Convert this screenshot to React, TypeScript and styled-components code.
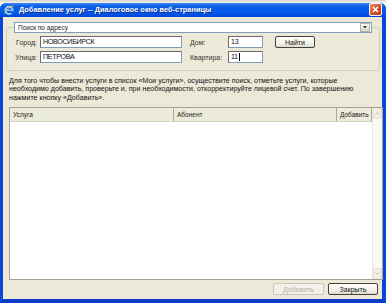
import React from 'react'
import styled, { createGlobalStyle } from 'styled-components'

const GlobalStyle = createGlobalStyle`
  html, body {
    margin: 0;
    padding: 0;
    width: 386px;
    height: 303px;
    overflow: hidden;
    background: #ffffff;
  }
  body {
    font-family: "Liberation Sans", Arial, sans-serif;
  }
`

const Screen = styled.div`
  width: 386px;
  height: 303px;
  display: flex;
  flex-direction: column;
`

const PageStrip = styled.div`
  height: 3px;
  background: linear-gradient(#d6d3c6, #f4f3ee);
`

const Window = styled.div`
  flex: 1;
  display: flex;
  flex-direction: column;
  background: #0a48dc;
  border-radius: 6px 6px 0 0;
  overflow: hidden;
`

const TitleBar = styled.div`
  height: 15px;
  display: flex;
  align-items: center;
  padding: 0 4px 0 4px;
  background: linear-gradient(#3b86f7 0%, #0a5ce8 25%, #0558ea 70%, #0446d6 100%);
  gap: 5px;
`

const TitleText = styled.div`
  flex: 1;
  color: #ffffff;
  font-size: 7.4px;
  font-weight: bold;
  text-shadow: 1px 1px 0 #0a2a8a;
  white-space: nowrap;
`

const CloseButton = styled.div`
  width: 11px;
  height: 11px;
  border: 1px solid #ffffff;
  border-radius: 2px;
  background: linear-gradient(135deg, #ec8a6a, #d34a22 60%, #c23a14);
  display: flex;
  align-items: center;
  justify-content: center;
`

const Client = styled.div`
  flex: 1;
  display: flex;
  flex-direction: column;
  background: #ece9d8;
  border-left: 3px solid #0b46d8;
  border-right: 4px solid #0b46d8;
  border-bottom: 4px solid #0a3cc8;
  padding: 5px 3px 4px 3px;
`

const GroupBox = styled.fieldset`
  margin: 0;
  padding: 1px 7px 6px 7px;
  border: 1px solid #d0d0bf;
  border-radius: 3px;
  display: flex;
  flex-direction: column;
  gap: 2px;
`

const Legend = styled.legend`
  padding: 0;
  margin: 0;
  width: 358px;
`

const Select = styled.div`
  height: 9px;
  border: 1px solid #7f9db9;
  background: #ffffff;
  display: flex;
  align-items: center;
  font-size: 6.5px;
  color: #222;
  padding-left: 3px;
`

const SelectText = styled.span`
  flex: 1;
`

const SelectArrow = styled.div`
  width: 8px;
  height: 7px;
  margin-right: 1px;
  background: linear-gradient(#fafaf5, #d9d6c6);
  border: 1px solid #b5b2a5;
  display: flex;
  align-items: center;
  justify-content: center;
`

const Row = styled.div`
  display: flex;
  align-items: center;
  height: 13px;
`

const Label = styled.span<{ $width: number; $right?: boolean }>`
  width: ${(p) => p.$width}px;
  text-align: ${(p) => (p.$right ? 'right' : 'left')};
  padding-right: ${(p) => (p.$right ? 3 : 0)}px;
  box-sizing: border-box;
  font-size: 7px;
  color: #333;
  white-space: nowrap;
`

const TextBox = styled.div<{ $width: number; $gap?: number }>`
  width: ${(p) => p.$width}px;
  height: 12px;
  box-sizing: border-box;
  border: 1px solid #7f9db9;
  border-top-color: #6a6a6a;
  border-left-color: #6a6a6a;
  background: #ffffff;
  margin-right: ${(p) => p.$gap || 0}px;
  font-size: 7.2px;
  letter-spacing: -0.35px;
  line-height: 10px;
  padding-left: 2px;
  color: #111;
  display: flex;
  align-items: center;
`

const Caret = styled.span`
  width: 1px;
  height: 8px;
  background: #000;
  margin-left: 1px;
`

const PushButton = styled.div<{ $width: number; $disabled?: boolean }>`
  width: ${(p) => p.$width}px;
  height: 12px;
  box-sizing: border-box;
  border: 1px solid ${(p) => (p.$disabled ? '#c9c7ba' : '#45423a')};
  border-radius: 2px;
  background: ${(p) =>
    p.$disabled ? '#f2f1e9' : 'linear-gradient(#fefefc, #f0efe7 70%, #dcd9cb)'};
  color: ${(p) => (p.$disabled ? '#b5b2a5' : '#111')};
  font-size: 7px;
  display: flex;
  align-items: center;
  justify-content: center;
`

const Hint = styled.p`
  margin: 6px 0 0 3px;
  font-size: 7.1px;
  line-height: 8.5px;
  color: #111;
  white-space: nowrap;
`

const Grid = styled.div`
  margin: 5px 0 0 3px;
  width: 374px;
  height: 173px;
  box-sizing: border-box;
  border: 1px solid #a5a293;
  background: #ffffff;
  display: flex;
`

const GridMain = styled.div`
  flex: 1;
  display: flex;
  flex-direction: column;
`

const HeaderRow = styled.div`
  height: 13px;
  display: flex;
  background: #ebeadb;
  border-bottom: 1px solid #d6d2c2;
`

const HeaderCell = styled.div<{ $width?: number }>`
  ${(p) => (p.$width ? `width: ${p.$width}px;` : 'flex: 1;')}
  box-sizing: border-box;
  border-right: 1px solid #aca899;
  font-size: 6.5px;
  color: #222;
  padding-left: 3px;
  display: flex;
  align-items: center;
  white-space: nowrap;
  overflow: hidden;
`

const ScrollBar = styled.div`
  width: 9px;
  display: flex;
  flex-direction: column;
  justify-content: space-between;
  background: #fbfaf6;
  border-left: 1px solid #ece9d8;
`

const ScrollArrow = styled.div`
  height: 9px;
  background: #f1efe6;
  border: 1px solid #e6e3d6;
  border-radius: 1px;
  display: flex;
  align-items: center;
  justify-content: center;
`

const Footer = styled.div`
  margin-top: 3px;
  display: flex;
  justify-content: flex-end;
  gap: 4px;
  padding-right: 1px;
`

const IeIcon = () => (
  <svg width="10" height="10" viewBox="0 0 10 10">
    <circle cx="5" cy="5.3" r="3.6" fill="none" stroke="#8fd0ff" strokeWidth="2" />
    <rect x="2.2" y="4.6" width="5.8" height="1.3" fill="#8fd0ff" />
    <rect x="6" y="6" width="3" height="2" fill="#0a5ce8" />
    <path d="M1 8.5 C 3 3, 7 1, 9.5 1.2" fill="none" stroke="#f7c33a" strokeWidth="1" />
  </svg>
)

const App: React.FC = () => {
  return (
    <Screen>
      <GlobalStyle />
      <PageStrip />
      <Window>
        <TitleBar>
          <IeIcon />
          <TitleText>Добавление услуг -- Диалоговое окно веб-страницы</TitleText>
          <CloseButton>
            <svg width="7" height="7" viewBox="0 0 7 7">
              <path d="M1 1 L6 6 M6 1 L1 6" stroke="#fff" strokeWidth="1.6" />
            </svg>
          </CloseButton>
        </TitleBar>
        <Client>
          <GroupBox>
            <Legend>
              <Select>
                <SelectText>Поиск по адресу</SelectText>
                <SelectArrow>
                  <svg width="4" height="3" viewBox="0 0 4 3">
                    <path d="M0 0 H4 L2 2.5 Z" fill="#333" />
                  </svg>
                </SelectArrow>
              </Select>
            </Legend>
            <Row style={{ marginTop: 2 }}>
              <Label $width={26} $right>
                Город:
              </Label>
              <TextBox $width={142} $gap={8}>
                НОВОСИБИРСК
              </TextBox>
              <Label $width={38}>Дом:</Label>
              <TextBox $width={35} $gap={12}>
                13
              </TextBox>
              <PushButton $width={40}>Найти</PushButton>
            </Row>
            <Row>
              <Label $width={26} $right>
                Улица:
              </Label>
              <TextBox $width={142} $gap={8}>
                ПЕТРОВА
              </TextBox>
              <Label $width={38}>Квартира:</Label>
              <TextBox $width={35}>
                11
                <Caret />
              </TextBox>
            </Row>
          </GroupBox>
          <Hint>
            Для того чтобы внести услуги в список «Мои услуги», осуществите поиск, отметьте услуги, которые
            <br />
            необходимо добавить, проверьте и, при необходимости, откорректируйте лицевой счет. По завершению
            <br />
            нажмите кнопку «Добавить».
          </Hint>
          <Grid>
            <GridMain>
              <HeaderRow>
                <HeaderCell $width={164}>Услуга</HeaderCell>
                <HeaderCell $width={163}>Абонент</HeaderCell>
                <HeaderCell>Добавить</HeaderCell>
              </HeaderRow>
            </GridMain>
            <ScrollBar>
              <ScrollArrow>
                <svg width="5" height="3" viewBox="0 0 5 3">
                  <path d="M0.5 2.5 L2.5 0.5 L4.5 2.5" fill="none" stroke="#c4c1b3" strokeWidth="1" />
                </svg>
              </ScrollArrow>
              <ScrollArrow>
                <svg width="5" height="3" viewBox="0 0 5 3">
                  <path d="M0.5 0.5 L2.5 2.5 L4.5 0.5" fill="none" stroke="#c4c1b3" strokeWidth="1" />
                </svg>
              </ScrollArrow>
            </ScrollBar>
          </Grid>
          <Footer>
            <PushButton $width={51} $disabled>
              Добавить
            </PushButton>
            <PushButton $width={50}>Закрыть</PushButton>
          </Footer>
        </Client>
      </Window>
    </Screen>
  )
}

export default App
